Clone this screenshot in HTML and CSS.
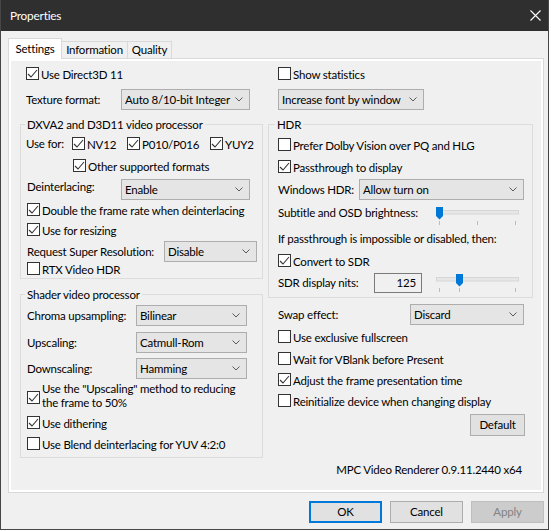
FILE: index.html
```html
<!DOCTYPE html>
<html>
<head>
<meta charset="utf-8">
<title>Properties</title>
<link rel="stylesheet" href="styles.css">
</head>
<body>
<div class="window">
  <div class="titlebar">
    <span class="title">Properties</span>
    <svg class="close" width="11" height="11" viewBox="0 0 11 11"><path d="M0.5 0.5L10.5 10.5M10.5 0.5L0.5 10.5" stroke="#fff" stroke-width="1.1"/></svg>
  </div>
  <div class="content">
    <div class="tabs">
      <div class="tab active t-settings">Settings</div>
      <div class="tab t-info">Information</div>
      <div class="tab t-quality">Quality</div>
    </div>
    <div class="panel">
      <div class="page">
        <div class="cols">
          <div class="col">
            <div class="top-l">
              <label class="cb"><span class="box"><svg viewBox="0 0 11 11" width="11" height="11"><path d="M1 6L4 9L10 2" class="ck"/></svg></span>Use Direct3D 11</label>
              <div class="frow mt9"><span class="lbl w95">Texture format:</span><div class="sel s129"><span>Auto 8/10-bit Integer</span><svg class="chev" width="8" height="5" viewBox="0 0 8 5"><path d="M0.5 0.5L4 4L7.5 0.5"/></svg></div></div>
            </div>
            <div class="group gl mt14">
              <div class="glabel">DXVA2 and D3D11 video processor</div>
              <div class="usefor mt5">
                <span class="uf-l">Use for:</span>
                <label class="cb uf-1"><span class="box"><svg viewBox="0 0 11 11" width="11" height="11"><path d="M1 6L4 9L10 2" class="ck"/></svg></span>NV12</label>
                <label class="cb uf-2"><span class="box"><svg viewBox="0 0 11 11" width="11" height="11"><path d="M1 6L4 9L10 2" class="ck"/></svg></span>P010/P016</label>
                <label class="cb"><span class="box"><svg viewBox="0 0 11 11" width="11" height="11"><path d="M1 6L4 9L10 2" class="ck"/></svg></span>YUY2</label>
              </div>
              <label class="cb mt9 ind46"><span class="box"><svg viewBox="0 0 11 11" width="11" height="11"><path d="M1 6L4 9L10 2" class="ck"/></svg></span>Other supported formats</label>
              <div class="frow top mt7"><span class="lbl w94">Deinterlacing:</span><div class="sel s129"><span>Enable</span><svg class="chev" width="8" height="5" viewBox="0 0 8 5"><path d="M0.5 0.5L4 4L7.5 0.5"/></svg></div></div>
              <label class="cb mt3"><span class="box"><svg viewBox="0 0 11 11" width="11" height="11"><path d="M1 6L4 9L10 2" class="ck"/></svg></span>Double the frame rate when deinterlacing</label>
              <label class="cb mt7"><span class="box"><svg viewBox="0 0 11 11" width="11" height="11"><path d="M1 6L4 9L10 2" class="ck"/></svg></span>Use for resizing</label>
              <div class="frow mt5"><span class="lbl w137">Request Super Resolution:</span><div class="sel s93"><span>Disable</span><svg class="chev" width="8" height="5" viewBox="0 0 8 5"><path d="M0.5 0.5L4 4L7.5 0.5"/></svg></div></div>
              <label class="cb"><span class="box"></span>RTX Video HDR</label>
            </div>
            <div class="group gl gl2 mt15">
              <div class="glabel">Shader video processor</div>
              <div class="frow mt3"><span class="lbl w109">Chroma upsampling:</span><div class="sel s111"><span>Bilinear</span><svg class="chev" width="8" height="5" viewBox="0 0 8 5"><path d="M0.5 0.5L4 4L7.5 0.5"/></svg></div></div>
              <div class="frow mt6"><span class="lbl w109">Upscaling:</span><div class="sel s111"><span>Catmull-Rom</span><svg class="chev" width="8" height="5" viewBox="0 0 8 5"><path d="M0.5 0.5L4 4L7.5 0.5"/></svg></div></div>
              <div class="frow mt5"><span class="lbl w109">Downscaling:</span><div class="sel s111"><span>Hamming</span><svg class="chev" width="8" height="5" viewBox="0 0 8 5"><path d="M0.5 0.5L4 4L7.5 0.5"/></svg></div></div>
              <label class="cb multi mt3"><span class="box"><svg viewBox="0 0 11 11" width="11" height="11"><path d="M1 6L4 9L10 2" class="ck"/></svg></span><span>Use the "Upscaling" method to reducing<br>the frame to 50%</span></label>
              <label class="cb mt6"><span class="box"><svg viewBox="0 0 11 11" width="11" height="11"><path d="M1 6L4 9L10 2" class="ck"/></svg></span>Use dithering</label>
              <label class="cb mt8"><span class="box"></span>Use Blend deinterlacing for YUV 4:2:0</label>
            </div>
          </div>

          <div class="col">
            <div class="top-r">
              <label class="cb"><span class="box"></span>Show statistics</label>
              <div class="frow mt9"><div class="sel s146"><span>Increase font by window</span><svg class="chev" width="8" height="5" viewBox="0 0 8 5"><path d="M0.5 0.5L4 4L7.5 0.5"/></svg></div></div>
            </div>
            <div class="group gr mt14">
              <div class="glabel">HDR</div>
              <label class="cb mt6"><span class="box"></span>Prefer Dolby Vision over PQ and HLG</label>
              <label class="cb mt9"><span class="box"><svg viewBox="0 0 11 11" width="11" height="11"><path d="M1 6L4 9L10 2" class="ck"/></svg></span>Passthrough to display</label>
              <div class="frow mt6"><span class="lbl w81">Windows HDR:</span><div class="sel s165"><span>Allow turn on</span><svg class="chev" width="8" height="5" viewBox="0 0 8 5"><path d="M0.5 0.5L4 4L7.5 0.5"/></svg></div></div>
              <div class="srow mt5"><span class="lbl w158">Subtitle and OSD brightness:</span>
                <svg class="slider sl1" width="84" height="19" viewBox="0 0 84 19">
                  <rect x="0.5" y="3.5" width="82" height="3.5" fill="#e7e7e7" stroke="#d6d6d6"/>
                  <path d="M3.5 14V18M41.5 14V18M79.5 14V18" stroke="#bcbcbc"/>
                  <path d="M0 0H7V9L3.5 12.5L0 9Z" fill="#0078d7"/>
                </svg>
              </div>
              <div class="line mt6">If passthrough is impossible or disabled, then:</div>
              <label class="cb mt8"><span class="box"><svg viewBox="0 0 11 11" width="11" height="11"><path d="M1 6L4 9L10 2" class="ck"/></svg></span>Convert to SDR</label>
              <div class="frow nits mt6"><span class="lbl w96">SDR display nits:</span><div class="edit">125</div>
                <svg class="slider sl2" width="84" height="19" viewBox="0 0 84 19">
                  <rect x="0.5" y="3.5" width="82" height="3.5" fill="#e7e7e7" stroke="#d6d6d6"/>
                  <path d="M3.5 14V18M23.5 14V18M79.5 14V18" stroke="#bcbcbc"/>
                  <path d="M20 0H27V9L23.5 12.5L20 9Z" fill="#0078d7"/>
                </svg>
              </div>
            </div>
            <div class="rbody">
              <div class="frow mt6"><span class="lbl w132">Swap effect:</span><div class="sel s114"><span>Discard</span><svg class="chev" width="8" height="5" viewBox="0 0 8 5"><path d="M0.5 0.5L4 4L7.5 0.5"/></svg></div></div>
              <label class="cb mt5"><span class="box"></span>Use exclusive fullscreen</label>
              <label class="cb mt9"><span class="box"></span>Wait for VBlank before Present</label>
              <label class="cb mt8"><span class="box"><svg viewBox="0 0 11 11" width="11" height="11"><path d="M1 6L4 9L10 2" class="ck"/></svg></span>Adjust the frame presentation time</label>
              <label class="cb mt8"><span class="box"></span>Reinitialize device when changing display</label>
              <div class="defrow mt7"><button class="btn bdef">Default</button></div>
            </div>
          </div>
        </div>
        <div class="version">MPC Video Renderer 0.9.11.2440 x64</div>
      </div>
    </div>
    <div class="buttons">
      <button class="btn ok">OK</button>
      <button class="btn">Cancel</button>
      <button class="btn disabled">Apply</button>
    </div>
  </div>
</div>
</body>
</html>
```

FILE: styles.css
```css
* { box-sizing: border-box; }
html, body { margin: 0; padding: 0; }
body {
  background: #ffffff;
  font-family: Lato, "Open Sans", sans-serif;
  font-size: 11.5px;
  letter-spacing: -0.2px;
  line-height: 15px;
  color: #000;
  width: 551px;
  height: 531px;
  overflow: hidden;
}
.window {
  width: 549px;
  height: 530px;
  border: 1px solid #474747;
  border-top: 0;
  background: #f0f0f0;
  display: flex;
  flex-direction: column;
}
.titlebar {
  height: 31px;
  flex: none;
  background: #2f2f2f;
  color: #fff;
  display: flex;
  align-items: center;
  justify-content: space-between;
  padding: 0 7px 0 9px;
  font-size: 11.8px;
}
.close { display: block; }
.content { padding: 7px 4px 0 7px; }

.tabs { display: flex; align-items: flex-end; height: 20px; }
.tab {
  height: 17px;
  border: 1px solid #d9d9d9;
  border-bottom: 0;
  background: #f0f0f0;
  text-align: center;
  line-height: 16px;
  margin-left: -1px;
}
.tab.active {
  height: 21px;
  margin-bottom: -1px;
  margin-left: 0;
  background: #ffffff;
  position: relative;
  z-index: 1;
  line-height: 19px;
}
.t-settings { width: 54px; }
.t-info { width: 67px; }
.t-quality { width: 45px; }

.panel {
  width: 536px;
  height: 435px;
  border: 1px solid #d9d9d9;
  background: #ffffff;
  padding: 2px;
}
.page {
  height: 100%;
  background: #f0f0f0;
  padding: 6px 0 0 9px;
}
.cols { display: grid; grid-template-columns: 243px 265px; column-gap: 5px; }
.col { display: flex; flex-direction: column; align-items: stretch; }
.top-l { padding-left: 6px; }
.top-r { padding-left: 10px; }

.mt3 { margin-top: 3px; }
.mt5 { margin-top: 5px; }
.mt6 { margin-top: 6px; }
.mt7 { margin-top: 7px; }
.mt8 { margin-top: 8px; }
.mt9 { margin-top: 9px; }
.mt14 { margin-top: 14px; }
.mt15 { margin-top: 15px; }

/* checkbox */
.cb { display: flex; align-items: flex-start; height: 13px; line-height: 15px; white-space: nowrap; }
.box {
  flex: none;
  width: 13px;
  height: 13px;
  border: 1px solid #333;
  background: #fff;
  margin-right: 2px;
}
.box svg { display: block; }
.ck { fill: none; stroke: #333; stroke-width: 1.1; }
.cb.multi { height: auto; align-items: flex-start; line-height: 14px; }
.cb.multi .box { margin-top: 9px; }
.ind46 { padding-left: 46px; }

/* use-for row */
.usefor { display: flex; align-items: center; height: 13px; }
.uf-l { width: 46px; margin-left: -1px; }
.uf-1 { width: 55px; }
.uf-2 { width: 83px; }

/* field rows */
.frow { display: flex; align-items: center; height: 21px; }
.frow.top { align-items: flex-start; }
.lbl { flex: none; white-space: nowrap; }
.w81 { width: 81px; }
.w94 { width: 94px; }
.w95 { width: 95px; }
.w96 { width: 96px; }
.w109 { width: 109px; }
.w132 { width: 132px; }
.w137 { width: 137px; }
.w158 { width: 158px; }

.sel {
  flex: none;
  height: 21px;
  border: 1px solid #adadad;
  background: #e5e5e5;
  display: flex;
  align-items: center;
  justify-content: space-between;
  padding: 0 6px 0 3px;
  white-space: nowrap;
}
.chev { display: block; flex: none; }
.chev path { fill: none; stroke: #5a5a5a; stroke-width: 1; }
.s93 { width: 93px; }
.s111 { width: 111px; }
.s114 { width: 114px; }
.s129 { width: 129px; }
.s146 { width: 146px; }
.s165 { width: 165px; }

/* group boxes */
.group { border: 1px solid #dcdcdc; display: flex; flex-direction: column; }
.gl { padding: 0 0 3px 6px; }
.gl2 { padding-bottom: 7px; }
.gr { padding: 0 0 4px 9px; }
.glabel {
  align-self: flex-start;
  margin: -8px 0 0 -2px;
  padding: 0 2px;
  background: #f0f0f0;
  line-height: 15px;
  white-space: nowrap;
}
.gr .glabel { margin-left: -3px; }

/* sliders */
.srow { display: flex; align-items: flex-start; height: 20px; }
.slider { display: block; flex: none; }
.sl1 { margin-top: 2px; }
.nits { align-items: flex-start; height: 20px; }
.nits .lbl { line-height: 20px; }
.edit {
  flex: none;
  width: 48px;
  height: 20px;
  border: 1px solid #7a7a7a;
  background: #f0f0f0;
  text-align: right;
  padding-right: 5px;
  line-height: 18px;
}
.sl2 { margin: 1px 0 0 14px; }
.line { line-height: 15px; white-space: nowrap; }

.rbody { padding-left: 10px; display: flex; flex-direction: column; }
.defrow { display: flex; justify-content: flex-end; padding-right: 8px; }

/* buttons */
.btn {
  font: inherit;
  letter-spacing: inherit;
  color: #000;
  width: 73px;
  height: 22px;
  border: 1px solid #adadad;
  background: #e1e1e1;
  padding: 0;
  margin: 0;
  line-height: 20px;
  text-align: center;
}
.bdef { width: 55px; }
.btn.ok { border: 2px solid #0078d7; line-height: 18px; }
.btn.disabled { background: #cccccc; border-color: #bfbfbf; color: #838383; }
.buttons { display: flex; justify-content: flex-end; gap: 8px; margin-top: 8px; }

.version {
  margin-top: 4px;
  text-align: right;
  padding-right: 19px;
  line-height: 15px;
}
```
